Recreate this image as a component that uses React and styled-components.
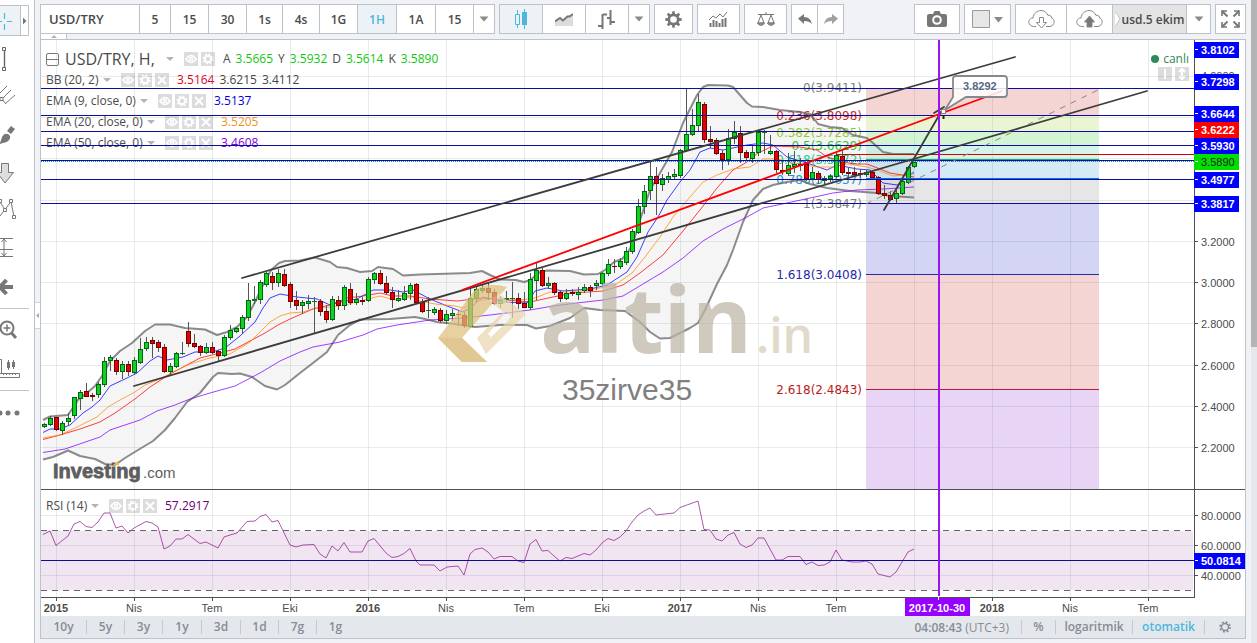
import React from "react";
import styled, { createGlobalStyle } from "styled-components";

const GlobalStyle = createGlobalStyle`
  * { box-sizing: border-box; }
  body { margin: 0; background: #f0f2f6; }
  button, input { font: inherit; color: inherit; }
`;

const UI_FONT = '"Trebuchet MS", "Open Sans", "Noto Sans", sans-serif';
const LINE = "#bdc1c9";

const Page = styled.div`
  display: flex;
  align-items: stretch;
  min-height: 100vh;
  overflow: hidden;
  font-family: ${UI_FONT};
  font-size: 12px;
  color: #4a4a4a;
`;

/* ---------- drawing tools ---------- */
const Sidebar = styled.nav`
  width: 35px;
  flex: none;
  padding-top: 1px;
  background: #fff;
  border-right: 1px solid ${LINE};
  display: flex;
  flex-direction: column;
`;
const ToolButton = styled.button`
  display: block;
  width: 34px;
  height: 38px;
  padding: 0;
  border: 0;
  background: none;
  svg { display: block; }
`;
const ToolDivider = styled.hr`
  width: 29px;
  height: 1px;
  margin: 3px 0 2px;
  border: 0;
  background: #c4c4c4;
`;
const Gutter = styled.div`
  width: 5px;
  flex: none;
  padding-top: 302px;
`;
const GutterHandle = styled.button`
  display: block;
  width: 5px;
  height: 27px;
  padding: 0;
  background: #fff;
  border: 1px solid #d0d3d9;
  border-width: 1px 0;
  svg { display: block; }
`;

/* ---------- top bar ---------- */
const Main = styled.main`
  flex: 1;
  min-width: 0;
`;
const Toolbar = styled.div`
  display: flex;
  gap: 4px;
  padding-top: 4px;
`;
const Spacer = styled.div`
  flex: 1;
`;
const Group = styled.div`
  display: flex;
  flex: none;
  height: 30px;
  background: #fff;
  border: 1px solid ${LINE};
`;
const SymbolInput = styled.input`
  width: 98px;
  padding: 0 8px;
  border: 0;
  background: none;
  font-size: 13px;
  font-weight: 600;
  outline: none;
`;
const BarButton = styled.button`
  width: ${(p) => p.$w}px;
  padding: 0;
  border: 0;
  border-left: 1px solid ${LINE};
  background: ${(p) => (p.$active ? "#edf2f6" : p.$grey ? "#e4e4e4" : "#fff")};
  color: ${(p) => (p.$active ? "#4db6dc" : "#4a4a4a")};
  font-weight: 600;
  display: flex;
  align-items: center;
  justify-content: center;
  &:first-child { border-left: 0; }
  svg { display: block; flex: none; }
`;
const Strip = styled.div`
  height: 5px;
  border-left: 1px solid ${LINE};
`;
const StripHandle = styled.button`
  display: flex;
  justify-content: center;
  align-items: center;
  width: 26px;
  height: 5px;
  padding: 0;
  background: #fff;
  border: 0;
  border-right: 1px solid ${LINE};
`;

/* ---------- chart ---------- */
const Panel = styled.section`
  border: 1px solid ${LINE};
  background: #fff;
`;
const ChartBox = styled.div`
  position: relative;
`;
const ChartSvg = styled.svg`
  display: block;
  position: relative;
  width: 100%;
  height: auto;
  pointer-events: none;
`;
const Legend = styled.div`
  position: absolute;
  left: 5px;
  top: ${(p) => p.$top}px;
  display: flex;
  flex-direction: column;
`;
const LegendRow = styled.div`
  display: flex;
  align-items: center;
  height: ${(p) => (p.$title ? 20 : 21)}px;
  line-height: 20px;
  white-space: nowrap;
`;
const LegendName = styled.span`
  width: ${(p) => p.$w}px;
  font-size: ${(p) => (p.$title ? 16 : 12)}px;
`;
const Caret = styled.span`
  width: 0;
  height: 0;
  margin-right: 10px;
  border: 4px solid transparent;
  border-top-color: #b4b4b4;
  border-bottom: 0;
`;
const Collapse = styled.button`
  position: relative;
  width: 13px;
  height: 13px;
  margin-right: 6px;
  padding: 0;
  border: 1px solid #777;
  border-radius: 2px;
  background: linear-gradient(#777, #777) center / 11px 1px no-repeat;
`;
const MiniButtons = styled.span`
  display: flex;
  gap: 3px;
  margin-right: 8px;
`;
const MiniButton = styled.button`
  width: 14px;
  height: 14px;
  padding: 0;
  border: 0;
  background: #dcdcdc;
  svg { display: block; }
`;
const Value = styled.span`
  margin-right: 5px;
  color: ${(p) => p.$c};
`;
const Live = styled.div`
  position: absolute;
  right: 56px;
  top: 10px;
  display: flex;
  flex-direction: column;
  align-items: flex-end;
  line-height: 17px;
  color: #2e8b57;
`;
const LiveDot = styled.span`
  display: inline-block;
  width: 8px;
  height: 8px;
  margin-right: 4px;
  border-radius: 50%;
  background: #2e8b57;
`;
const LiveButtons = styled.div`
  display: flex;
  gap: 3px;
`;

/* ---------- bottom bar ---------- */
const BottomBar = styled.div`
  display: flex;
  align-items: center;
  height: 22px;
  background: #e4e8ed;
`;
const BottomButton = styled.button`
  width: ${(p) => p.$w}px;
  height: 14px;
  padding: 0;
  border: 0;
  border-left: ${(p) => (p.$first ? "0" : "1px solid #c6cad0")};
  background: none;
  color: ${(p) => (p.$active ? "#4db6dc" : "#888c93")};
  font-weight: 600;
  line-height: 14px;
  display: flex;
  justify-content: center;
  align-items: center;
`;
const Clock = styled.span`
  margin-right: 12px;
  color: #888c93;
  b { font-weight: 600; }
`;
const RightGutter = styled.div`
  width: 5px;
  flex: none;
`;
const ScrollTrack = styled.div`
  width: 6px;
  flex: none;
  background: #e6e7ea;
`;
const ScrollThumb = styled.div`
  height: 347px;
  background: #b4b4b6;
`;

/* ---------- icons ---------- */
const gearPath = (n, r1, r2, c) => {
  const pts = [];
  for (let k = 0; k < n; k++) {
    const a = (k * 2 * Math.PI) / n;
    const s = Math.PI / n;
    [[-0.62, r1], [-0.36, r2], [0.36, r2], [0.62, r1]].forEach(([f, r]) => {
      pts.push(`${(c + r * Math.sin(a + f * s)).toFixed(2)} ${(c - r * Math.cos(a + f * s)).toFixed(2)}`);
    });
  }
  return `M${pts.join("L")}Z`;
};
const Gear = ({ size, color, sw = 2.6 }) => (
  <svg width={size} height={size} viewBox="0 0 18 18">
    <path d={gearPath(8, 6.4, 8.8, 9)} fill={color} />
    <circle cx="9" cy="9" r="3.6" fill="none" stroke={color} strokeWidth={sw} />
    <circle cx="9" cy="9" r="3.5" fill="#fff" />
  </svg>
);
const Down = ({ c = "#8a8a8a" }) => (
  <svg width="10" height="6" viewBox="0 0 10 6"><path d="M0.5 0.5h9L5 5.5z" fill={c} /></svg>
);
const EyeIcon = () => (
  <svg width="14" height="14" fill="none" stroke="#fff">
    <path d="M2 7q5-7 10 0q-5 7-10 0z" strokeWidth="1.6" /><circle cx="7" cy="7" r="1.5" strokeWidth="1.4" />
  </svg>
);
const MiniGear = () => (
  <svg width="14" height="14">
    <circle cx="7" cy="7" r="3.2" fill="none" stroke="#fff" strokeWidth="2" />
    <circle cx="7" cy="7" r="4.8" fill="none" stroke="#fff" strokeWidth="1.6" strokeDasharray="1.9 1.87" />
  </svg>
);
const CloseIcon = () => (
  <svg width="14" height="14"><path d="M3 3l8 8M11 3l-8 8" stroke="#fff" strokeWidth="2" /></svg>
);
const Minis = ({ close = true }) => (
  <MiniButtons>
    <MiniButton aria-label="Gizle"><EyeIcon /></MiniButton>
    <MiniButton aria-label="Ayarlar"><MiniGear /></MiniButton>
    {close && <MiniButton aria-label="Kaldır"><CloseIcon /></MiniButton>}
  </MiniButtons>
);

const CLOUD = "M8 17.5H5.5C-1 16.500-.5 9 5 9C5.500 4 9.500 1.500 13 1.500C17 1.500 19 4 20 6.500C22 5.500 24 7.500 23.500 9C27.500 10 27 16.500 22 17.500H18";

const tools = [
  ["İmleç", <>
    <path d="M0 4h20v31H0z" fill="#edf2f6" /><path d="M0 4.500H28.500V34.500H0M20.500 5V34" fill="none" stroke={LINE} />
    <path d="M4.500 12v6M4.500 23v6M0 20.500h2M7 20.500h5" stroke="#4db6dc" strokeWidth="1.2" /><path d="M23 16.500l3.500 3.500-3.500 3.500z" fill="#777" />
  </>],
  ["Trend çizgisi", <g fill="#fff" stroke="#666"><path d="M4.500 11v18" strokeWidth="1.400" /><path d="M2.500 8.500h3v3h-3zM2.500 28.500h3v3h-3z" /></g>],
  ["Yaba", <g fill="none" stroke="#777"><path d="M0 16l7-7M3 21L11 13M5 27l10-9M1 21l5 6" /><path d="M0 20.500h3v3H0z" fill="#fff" /></g>],
  ["Fırça", <><path d="M0 28c2-5 2-8 5-9c4-1 7 3 4 6C7 28 4 27 0 29z" fill="#777" /><path d="M7 16l4-5 4 3-4 5z" fill="#777" /></>],
  ["Ok", <path d="M1.500 10.500h7v9h5L5 30l-8-10.500h4.500z" fill="#ddd" stroke="#777" />],
  ["Desen", <g fill="#fff" stroke="#777"><path d="M0 11l5 7.500 6-8 3 15M5 18.500L0 25" fill="none" /><path d="M-1.500 8.500h3v3h-3zM9.500 8.500h3v3h-3zM3.500 17.500h3v3h-3zM12.500 24.500h3v3h-3z" /></g>],
  ["Ölçüm", <g stroke="#777" fill="none"><path d="M0 9.500h13M0 20.500h13M0 27.500h13M4 10v17" /><path d="M1.500 13L4 10l2.500 3M1.500 24L4 27l2.500-3" /></g>],
  ["Geri", <path d="M13 20H1M6.500 13L0 20l6.500 7" fill="none" stroke="#777" strokeWidth="4" />],
  null,
  ["Yakınlaştır", <g fill="none" stroke="#777"><circle cx="7" cy="17" r="6.500" strokeWidth="2" /><path d="M3.500 17h7M7 13.500v7" strokeWidth="1.500" /><path d="M11.500 22l4.500 5" strokeWidth="3" /></g>],
  ["Cetvel", <g fill="none" stroke="#777"><path d="M0 24.500h19.500v4H0M3.500 24v2M6.500 24v2M9.500 24v2M12.500 24v2M15.500 24v2M0 10.500h1.500v14" /><path d="M8.500 11v10M13.500 11v9" /><path d="M8.500 13v6M13.500 13v5" strokeWidth="3" /></g>],
  null,
  ["Diğer", <g fill="#777"><circle cx="0" cy="20" r="2.500" /><circle cx="8" cy="20" r="2.500" /><circle cx="17" cy="20" r="2.500" /></g>],
];

/* ---------- chart data, in chart units: [up, high, bodyTop, bodyBottom, low] ---------- */
const candles = `g423,424,426,427 g416,418,424,425 r417,417,429,430 g421,423,430,434 g413,418,421,425 g397,397,415,418 g390,392,398,409 r383,391,396,396 r393,395,396,400 g382,384,394,397 g357,361,384,386 g355,357,360,370 r358,360,371,374 g361,364,371,378 r361,364,371,375 g357,360,372,373 g338,349,362,363 g337,342,348,350 r337,340,343,357 r340,342,347,351 r344,347,371,372 g363,366,371,375 g352,353,366,367 g342,353,353,354 r322,331,343,346 r334,343,346,347 r345,346,352,355 g343,347,352,353 r342,347,352,353 r350,351,355,360 g335,337,355,356 g325,330,337,339 g327,328,331,332 g315,317,328,333 g283,300,317,320 g286,299,300,303 g280,282,299,303 g272,273,284,286 r272,276,282,289 g269,273,282,286 r269,274,285,286 r282,284,301,307 r291,300,305,309 g300,302,305,313 g295,301,303,308 g297,301,301,333 r299,301,311,315 r305,311,319,322 g296,299,319,320 r296,300,305,309 g285,287,305,309 r283,289,302,304 g293,299,302,304 r297,300,301,304 g277,279,300,301 g272,273,279,283 r270,273,283,284 r276,283,292,293 r287,292,299,307 g290,298,300,301 g286,293,299,300 g283,285,293,299 r283,284,302,303 r299,302,311,312 g297,310,310,317 g307,309,312,314 r308,310,320,322 g310,314,320,323 g309,313,315,320 r311,314,314,325 r312,315,325,327 g289,298,326,327 g287,289,298,302 g285,288,290,292 r282,288,292,299 r289,292,303,304 g296,300,303,307 g291,298,299,302 g282,298,298,317 r293,298,303,308 r292,303,307,307 g273,279,307,309 g263,270,280,299 r268,270,285,286 g277,283,285,288 r282,283,292,294 r291,292,298,301 g289,293,298,299 r289,292,293,295 g287,292,294,299 g284,287,290,292 r285,287,290,296 g280,283,285,289 g272,273,283,284 g259,264,273,275 r259,266,266,272 g258,261,266,268 g247,251,262,264 g229,231,251,253 g199,206,232,233 g185,191,206,213 g162,176,190,199 r167,176,183,214 g174,178,184,190 g172,176,179,182 g169,174,176,179 g149,150,175,177 g88,134,150,151 g109,125,134,135 g94,102,125,131 r102,104,139,142 r126,139,141,147 r138,140,153,154 r150,153,159,169 g129,138,159,164 g121,132,138,143 r126,133,152,162 r150,152,157,160 g146,152,158,162 g130,132,152,155 g130,132,132,153 g135,151,153,154 r150,151,169,172 r160,170,171,174 g153,165,173,175 g151,164,166,172 r158,164,165,170 r162,164,178,180 g167,172,178,179 r171,173,179,183 g176,178,180,183 g174,176,178,181 g153,155,176,177 r150,156,172,174 r168,172,173,176 r167,172,174,176 r169,173,174,177 g170,172,174,176 r171,172,177,178 r176,177,193,194 r185,193,195,198 r191,195,199,200 g190,193,198,203 g180,181,193,194 g166,167,182,183 g162,162,166,167`
  .split(" ")
  .map((s, i) => ({ x: 44 + i * 6, up: s[0] === "g", v: s.slice(1).split(",").map(Number) }));

const bbUpper = "43,420 50,416.5 56,416 68,415 78,400 88,392 95,386 102,376 110,361 120,351 132,343 145,331 155,324.5 170,324.5 185,328 205,329.5 217,335 227,332 237,327 247,317 255,302 263,285 271,270 279,263 285,261 300,260.5 307,259 315,257.5 330,262 337,267 347,268 360,272 372,271 378,267 393,269 403,275.5 420,274.5 470,273 482,271 490,275 500,279.5 516,280 524,282 530,280 540,272 547,270.5 570,271 584,274.5 598,274 605,270 614,262 622,259 628,252 633,243 640,220 650,190 660,173 672,152 683,123 697,95 703,87 708,85 728,85.5 733,87 747,103 752,106.5 763,107 780,110 800,112 810,114 815,120 818,124 830,127 842,128 853,135 867,138 873,143 883,152 893,154 914,154";
const bbLower = "43,459.5 53,457 60,454 68,450.5 80,456 95,459 105,464 115,465 125,458 138,450 153,441 165,430 175,418 187,402 200,393 213,377 218,373 232,374 240,373.5 252,377 265,386 277,389.5 285,385 300,373 313,363 327,352 338,335 350,325 360,319.5 390,319 415,317 425,319 437,322 455,324 475,327 500,325 527,325 536,328.5 550,326 570,318 580,311 584,308 600,310 625,311 640,322 650,332 660,338.5 670,338 690,328 698,323 705,310 717,284 727,265 733,250 743,222 753,200 763,189 773,185 787,182 800,180 810,184 827,188 850,191 877,193 890,196 914,197.5";
const bbMiddle = "43,439.5 60,435 80,429 100,422 115,413 135,399 150,387 170,374 185,366 200,358 220,353 235,349 250,341 265,333 278,325 290,319 313,309 330,305 347,298 363,296 380,293 393,296 410,296 430,299 457,301 483,298 507,300 530,302 553,297 573,293 603,291 623,285 640,273 663,255 683,231 700,210 717,188 733,170 747,162 758,153 773,146 800,147 817,150 827,157 853,164 867,164 880,169 890,173 914,177";
const ema20 = "43,438 60,435 75,428 97,417 108,407 120,400 135,392 145,385 160,379 175,371 190,364 210,358 230,354 250,342 260,332 270,322 280,316 290,313 303,312 315,308 330,307 345,305 360,301 380,296 395,300 412,297 420,301 435,304 455,306 464,308 475,301 500,298 520,300 535,298 550,292 570,292 590,290 615,285 632,273 645,257 660,237 673,217 690,197 703,182 717,175 733,169 750,167 763,159 777,159 800,164 817,167 833,167 847,164 867,167 880,171 893,176 914,174";
const ema9 = "43,432.5 50,429 60,429 70,425 83,413 92,407 100,400 110,386 125,379 137,373 150,361 158,356 167,360 183,357 195,352 212,352 225,348 240,336 255,322 263,308 270,298 280,294 297,297 317,299 330,305 340,302 357,299 373,290 390,290 403,292 413,290 430,299 447,306 463,312 470,308 483,297 487,298 503,302 527,303 535,291 547,288 563,291 590,289 607,285 627,272 637,257 648,232 658,217 667,200 680,182 690,170 700,152 710,148 723,150 747,145 763,143 773,145 787,157 807,163 827,170 837,165 857,169 870,170 883,183 897,185 914,172";
const ema50 = "43,452.5 65,449 100,437 110,430 140,420 157,411 175,405 190,399 210,393 235,386 260,373 280,361 300,352 313,347 340,342 363,335 377,329 397,325 417,322 430,320 463,318 490,315 530,310 553,306 577,303 603,300 623,296 643,284 663,272 683,258 703,241 723,229 747,217 763,208 787,203 810,198 833,193 857,190 883,189 914,187";
const rsi = "43,534.5 50,531 56,545.5 68,536 74,524 80,521.5 86,526.5 92,527.5 98,522 104,513 110,513 116,528 122,526 128,533 134,528 146,521.5 152,523 158,527 164,549 170,546 176,539 182,539 188,534.5 200,543.5 206,542 218,548 224,537 230,535 237,533 247,521.5 255,521 260,516.5 266,514.5 272,522 278,520.5 290,545 296,547 303,545 314,544.5 320,554 326,558 332,546 338,551 344,542.5 350,552 362,552 368,541 374,538.5 386,553 392,557.5 398,556.5 404,553.5 410,548.5 416,561 420,565 434,565 440,571 447,567 458,566 464,575 470,554 475,549.5 482,548 488,552 494,559 500,556.5 512,556.5 518,561 524,562.5 530,544 536,539.5 542,551 548,550.5 554,556 560,561 566,557.5 572,558.5 578,556 584,553.5 590,555 596,550 602,543 608,538.5 614,540.5 620,537 626,531 632,522 638,515 644,511 650,508 656,515 674,513 680,507.5 698,501 704,529.5 710,530 716,539 722,541 728,535 734,532.5 740,544 746,547.5 752,545 758,538 764,538 776,560 782,560 788,556.5 800,556.5 806,564.5 812,562 818,565.5 824,565 830,562 836,550 842,560 852,562 860,562 866,561 872,564 878,574 884,575.5 890,577 896,572 902,562 908,552 914,549";

const months = [["2015", 1], ["Nis"], ["Tem"], ["Eki"], ["2016", 1], ["Nis"], ["Tem"], ["Eki"], ["2017", 1], ["Nis"], ["Tem"], [""], ["2018", 1], ["Nis"], ["Tem"]]
  .map(([label, bold], i) => ({ label, bold, x: 56.5 + 78 * i }));
const gridY = [76.5, 117.5, 158.5, 200.5, 241.5, 282.5, 323.5, 365.5, 406.5, 447.5, 515.5, 545.5, 575.5];
const levels = [88.5, 115.5, 131.5, 145.5, 160.5, 179.5, 203.5];
const zones = [[89, 116, "#cc2828"], [116, 132, "#95cc28"], [132, 146, "#28cc28"], [146, 160, "#28cc95"], [160, 179, "#2895cc"], [179, 203, "#808080"], [203, 274, "#2828cc"], [274, 389, "#cc2828"], [389, 489, "#8a28cc"]];
const fibs = [["0(3.9411)", 88, "#808080"], ["0.236(3.8098)", 116, "#cc2828"], ["0.382(3.7285)", 133, "#95cc28"], ["0.5(3.6629)", 146, "#28cc28"], ["0.618(3.5972)", 160, "#28cc95"], ["0.786(3.5037)", 180, "#2895cc"], ["1(3.3847)", 204, "#808080"], ["1.618(3.0408)", 275, "#2828aa"], ["2.618(2.4843)", 390, "#b81c1c"]];
const prices = [["4.0000", 76], ["3.2000", 242], ["3.0000", 283], ["2.8000", 324], ["2.6000", 366], ["2.4000", 407], ["2.2000", 448], ["80.0000", 516], ["60.0000", 546], ["40.0000", 576]];
const tags = [["3.8102", 50, "#00f"], ["3.7298", 82, "#00f"], ["3.6644", 114, "#00f"], ["3.6222", 130, "#f00"], ["3.5930", 146, "#00f"], ["3.5890", 162, "#00e000"], ["3.4977", 180, "#00f"], ["3.8817", 204, "#00f"], ["50.0814", 561, "#00f"]]
  .map((t) => (t[1] === 204 ? ["3.3817", 204, "#00f"] : t));

const Poly = ({ p, c, w = 1, o = 0.75 }) => (
  <polyline points={p} fill="none" stroke={c} strokeWidth={w} opacity={o} strokeLinejoin="round" />
);

const Chart = () => (
  <ChartSvg viewBox="41 40 1204 576" role="img" aria-label="USD/TRY grafiği">
    <g stroke="#8ba3a3" strokeOpacity="0.22">
      {months.map((m) => <path key={m.x} d={`M${m.x} 40V597`} />)}
      {gridY.map((y) => <path key={y} d={`M41 ${y}H1194`} />)}
    </g>
    <polygon points={`${bbUpper} ${bbLower.split(" ").reverse().join(" ")}`} fill="#808080" opacity="0.08" />
    <rect x="41" y="531" width="1152" height="59" fill="#800080" opacity="0.1" />
    {zones.map(([a, b, c]) => <rect key={a} x="866" y={a} width="233" height={b - a} fill={c} opacity="0.2" />)}
    <g fontFamily='"DejaVu Sans", Verdana, sans-serif' fontSize="12" textAnchor="end">
      {fibs.map(([t, y, c]) => <text key={t} x="862" y={y + 4} fill={c}>{t}</text>)}
    </g>

    <Poly p={bbUpper} c="#666" w={2} />
    <Poly p={bbLower} c="#666" w={2} />
    <Poly p={bbMiddle} c="#f00" />
    <Poly p={ema9} c="#00f" />
    <Poly p={ema20} c="#ff8c00" />
    <Poly p={ema50} c="#8000ff" />

    <g shapeRendering="crispEdges">
      {candles.map(({ x, up, v }) => (
        <g key={x}>
          <path d={`M${x + 0.5} ${v[0]}V${v[3] + 1}`} stroke="#555" />
          {v[2] - v[1] < 2
            ? <rect x={x - 2} y={v[1]} width="5" height={v[2] - v[1] + 1} fill={up ? "#007a1c" : "#7a0000"} />
            : <rect x={x - 1.5} y={v[1] + 0.5} width="4" height={v[2] - v[1]} fill={up ? "#0fd21c" : "#e60000"} stroke={up ? "#006414" : "#6e0000"} />}
        </g>
      ))}
    </g>

    <g shapeRendering="crispEdges">
      <path d="M836 154.500H1194" stroke="#e00000" />
      <path d="M866 159.500H1099" stroke="#28a878" />
      <path d="M866 178.500H1099" stroke="#0070f0" />
      <path d="M866 274.500H1099" stroke="#2828aa" />
      <path d="M866 389.500H1099" stroke="#b81c3c" />
      {levels.map((y) => <path key={y} d={`M41 ${y}H1194`} stroke="#0c0ca0" />)}
      <path d="M41 161.500H1194" stroke="#0a90b0" strokeDasharray="1 1" />
    </g>
    <path d="M866 204L1098 90" stroke="#888" strokeDasharray="6 6" />

    <g stroke="#3c3c3c" strokeWidth="1.800" strokeLinecap="round">
      <path d="M242 278L1015 57" /><path d="M134 386L1147 91" />
      <path d="M884 210L941 112M934 113L944 107" />
    </g>
    <path d="M462 290L1002 91" stroke="#f00" strokeWidth="1.800" />

    {/* site watermark */}
    <g opacity="0.72">
      <path d="M438 338L474 291Q486 281 507 287L462 338L487 362H462z" fill="#dfc07c" />
      <path d="M438 338H462L487 362H462z" fill="#d6b268" />
      <path d="M477 338L503 312L489 300L499 294L526 314L486 354zM491 337L486 343L495 333L506 323L511 316L506 312L488 334z" fill="#e8d6b0" fillRule="evenodd" />
      <text x="540" y="353" fontFamily='"Open Sans", sans-serif' fontWeight="700" fontSize="92" fill="#bdb5a6">altin</text>
      <text x="756" y="353" fontFamily='"Open Sans", sans-serif' fontWeight="600" fontSize="48" fill="#d6ccb6">.in</text>
    </g>
    <text x="562" y="400" fontFamily='"Liberation Sans", Arial, sans-serif' fontSize="30" fill="#808080">35zirve35</text>
    <g fontFamily='"Liberation Sans", Arial, sans-serif' fill="#5e5e5e">
      <text x="53" y="478" fontSize="20" fontWeight="700" stroke="#5e5e5e" strokeWidth="0.800">Investing</text>
      <text x="143" y="478" fontSize="15">.com</text>
      <path d="M112 466L118 461L119 465z" fill="#f0b840" />
    </g>

    <Poly p={rsi} c="#800080" o={0.65} />
    <g shapeRendering="crispEdges">
      <path d="M41 530.500H1194M41 590.500H1194" stroke="#666" strokeDasharray="6 5" />
      <path d="M41 560.500H1194" stroke="#0c0ca0" />
      <path d="M41 489.500H1245M1194.500 40V597M41 597.500H1195" stroke="#505050" fill="none" />
      <path d="M938.500 40V596" stroke="#9a14f5" strokeWidth="2" />
      {months.map((m) => <path key={m.x} d={`M${m.x} 598v3`} stroke="#505050" />)}
    </g>

    {/* price callout */}
    <path d="M956 76H1004Q1007 76 1007 79V94Q1007 97 1004 97H966L945 110L953 97V79Q953 76 956 76z" fill="#fff" fillOpacity="0.850" stroke="#85898f" strokeWidth="1.800" />
    <rect x="941.500" y="109.500" width="4" height="4" fill="#fff" stroke="#888" />
    <path d="M943.500 115v4" stroke="#222" strokeWidth="2" />

    <g fontFamily='"Liberation Sans", Arial, sans-serif' fontSize="11" fill="#4c4c4c">
      <text x="963" y="90" fontWeight="700" fill="#566a82">3.8292</text>
      {prices.map(([t, y]) => (
        <g key={t}><path d={`M1195 ${y - 0.5}h3`} stroke="#505050" /><text x="1201" y={y + 4}>{t}</text></g>
      ))}
      {tags.map(([t, y, c]) => (
        <g key={t}>
          <rect x="1194" y={y - 8} width={y > 500 ? 51 : 45} height="16" fill={c} />
          <path d={`M1195 ${y - 0.5}h3`} stroke="#fff" />
          <text x="1201" y={y + 4} fontWeight={c === "#00e000" ? 400 : 700} fill={c === "#00e000" ? "#222" : "#fff"}>{t}</text>
        </g>
      ))}
      {months.map((m) => (
        <text key={m.x} x={m.x - 0.5} y="612" textAnchor="middle" fontWeight={m.bold ? 700 : 400}>{m.label}</text>
      ))}
      <rect x="905" y="598" width="65" height="18" fill="#9600ff" />
      <path d="M938.500 597v3" stroke="#fff" />
      <text x="937" y="612" textAnchor="middle" fill="#fff" fontWeight="700">2017-10-30</text>
    </g>
  </ChartSvg>
);

const intervals = [["5", 31], ["15", 38], ["30", 38], ["1s", 36], ["4s", 37], ["1G", 38], ["1H", 39], ["1A", 39], ["15", 38]];
const ranges = [["10y", 45], ["5y", 38], ["3y", 38], ["1y", 39], ["3d", 39], ["1d", 38], ["7g", 38], ["1g", 38]];
const indicators = [
  ["BB (20, 2)", 57, [["3.5164", "#e00020"], ["3.6215", "#444"], ["3.4112", "#444"]]],
  ["EMA (9, close, 0)", 94, [["3.5137", "#0000d8"]]],
  ["EMA (20, close, 0)", 101, [["3.5205", "#f09020"]]],
  ["EMA (50, close, 0)", 101, [["3.4608", "#8000e0"]]],
];
const ohlc = [["A", "3.5665"], ["Y", "3.5932"], ["D", "3.5614"], ["K", "3.5890"]];

export default function App() {
  return (
    <Page>
      <GlobalStyle />
      <Sidebar>
        {tools.map((t, i) => t
          ? <ToolButton key={i} aria-label={t[0]}><svg width="34" height="38" viewBox="0 0 34 38">{t[1]}</svg></ToolButton>
          : <ToolDivider key={i} />)}
      </Sidebar>
      <Gutter>
        <GutterHandle aria-label="Paneli gizle"><svg width="5" height="25"><path d="M4 10v5L1 12.500z" fill="#aaa" /></svg></GutterHandle>
      </Gutter>
      <Main>
        <Toolbar>
          <Group>
            <SymbolInput aria-label="Sembol" defaultValue="USD/TRY" />
            {intervals.map(([t, w], i) => (
              <BarButton key={i} $w={w} $active={t === "1H"}>{t}</BarButton>
            ))}
            <BarButton $w={21} aria-label="Aralıklar"><Down /></BarButton>
          </Group>
          <Group>
            <BarButton $w={42} $active aria-label="Mum">
              <svg width="14" height="20"><path d="M3.500 1v18" stroke="#4db6dc" /><path d="M1.500 5.500h4v10h-4z" fill="#edf2f6" stroke="#4db6dc" /><path d="M10.500 0v20" stroke="#4db6dc" /><path d="M8 3h5v13H8z" fill="#4db6dc" /></svg>
            </BarButton>
            <BarButton $w={43} aria-label="Alan">
              <svg width="18" height="13"><path d="M0 8l5-3 3 2 4-4 6-2v12H0z" fill="#dcdcdc" /><path d="M0 8.500l5-3.500 3 2.500 4.500-4 2 0L18 1" fill="none" stroke="#777" strokeWidth="2" /></svg>
            </BarButton>
            <BarButton $w={43} aria-label="Bar">
              <svg width="18" height="19"><path d="M0 16h4M4.500 4v15M5 4.500h4M9 8h3M12.500 0v15M13 12h4" fill="none" stroke="#777" strokeWidth="2" /></svg>
            </BarButton>
            <BarButton $w={21} aria-label="Grafik türleri"><Down /></BarButton>
          </Group>
          <Group><BarButton $w={37} aria-label="Ayarlar"><Gear size={17} color="#777" /></BarButton></Group>
          <Group>
            <BarButton $w={41} aria-label="Göstergeler">
              <svg width="19" height="17"><path d="M1.500 16v-4M4.500 16V9M7.500 16v-6M10.500 16v-4M13.500 16V8M16.500 16V7" stroke="#777" strokeWidth="2" /><path d="M0 9l4-4 3 2 4-4 3 3 4-5" fill="none" stroke="#777" /></svg>
            </BarButton>
          </Group>
          <Group>
            <BarButton $w={41} aria-label="Karşılaştır">
              <svg width="18" height="15" fill="none" stroke="#777"><path d="M1 2.500h16M9 0v3M4 3L1 11h6zM14 3l-3 8h6z" /><path d="M0.500 11h7c-1 3-6 3-7 0zM10.500 11h7c-1 3-6 3-7 0z" fill="#999" /></svg>
            </BarButton>
          </Group>
          <Group>
            <BarButton $w={25} aria-label="Geri al"><svg width="14" height="11"><path d="M0 4.500L6 0v3c5 0 7 3 8 7c-2-2-4-3-8-3v3z" fill="#777" /></svg></BarButton>
            <BarButton $w={26} aria-label="Yinele"><svg width="14" height="11"><path d="M14 4.500L8 0v3c-5 0-7 3-8 7c2-2 4-3 8-3v3z" fill="#a0a0a0" /></svg></BarButton>
          </Group>
          <Spacer />
          <Group>
            <BarButton $w={44} aria-label="Ekran görüntüsü">
              <svg width="20" height="16"><path d="M2 3h4l1.500-3h5L14 3h4q2 0 2 2v9q0 2-2 2H2q-2 0-2-2V5q0-2 2-2z" fill="#777" /><circle cx="10" cy="9" r="3.800" fill="#777" stroke="#fff" strokeWidth="2" /></svg>
            </BarButton>
          </Group>
          <Group>
            <BarButton $w={45} aria-label="Renk">
              <svg width="31" height="18"><path d="M0.500 0.500h17v17H0.500z" fill="#e6e6e6" stroke="#999" /><path d="M22 7h9l-4.500 5.500z" fill="#8a8a8a" /></svg>
            </BarButton>
          </Group>
          <Group>
            <BarButton $w={50} aria-label="Yükle">
              <svg width="27" height="20" viewBox="0 0 27 20" fill="none" stroke="#888"><path d={CLOUD} /><path d="M11.500 8.500h4v5h3L13.500 19l-5-5.500h3z" /></svg>
            </BarButton>
            <BarButton $w={46} aria-label="Kaydet">
              <svg width="27" height="20" viewBox="0 0 27 20" fill="none" stroke="#888"><path d={CLOUD} /><path d="M11 18v-5H8.500l5-6 5 6H16v5z" fill="#777" /></svg>
            </BarButton>
            <BarButton $w={74} $grey>
              <svg width="7" height="28"><path d="M0 5L5 14L0 23z" fill="#fff" /><path d="M0 6l5 8-5 8" fill="none" stroke={LINE} /></svg>
              usd.5 ekim
            </BarButton>
            <BarButton $w={24} aria-label="Düzenler"><Down /></BarButton>
          </Group>
          <Group>
            <BarButton $w={29} aria-label="Tam ekran">
              <svg width="19" height="18" fill="none" stroke="#777" strokeWidth="2"><path d="M1 6V1h5M13 1h5v5M18 12v5h-5M6 17H1v-5" strokeWidth="1.600" /><path d="M1 1l5.500 5.500M18 1l-5.500 5.500M18 17l-5.500-5.500M1 17l5.500-5.500" /></svg>
            </BarButton>
          </Group>
        </Toolbar>
        <Strip>
          <StripHandle aria-label="Araç çubuğunu gizle"><svg width="6" height="3"><path d="M0 3h6L3 0z" fill="#b0b0b0" /></svg></StripHandle>
        </Strip>
        <Panel>
          <ChartBox>
            <Legend $top={9}>
              <LegendRow $title>
                <Collapse aria-label="Göstergeyi daralt" />
                <LegendName $title $w={101}>USD/TRY, H,</LegendName>
                <Caret />
                <Minis close={false} />
                {ohlc.map(([k, v]) => <React.Fragment key={k}><Value $c="#4a4a4a">{k}</Value><Value $c="#10c810">{v}</Value></React.Fragment>)}
              </LegendRow>
              {indicators.map(([name, w, vals]) => (
                <LegendRow key={name}>
                  <LegendName $w={w}>{name}</LegendName>
                  <Caret />
                  <Minis />
                  {vals.map(([v, c]) => <Value key={v} $c={c}>{v}</Value>)}
                </LegendRow>
              ))}
            </Legend>
            <Legend $top={455}>
              <LegendRow>
                <LegendName $w={45}>RSI (14)</LegendName>
                <Caret />
                <Minis />
                <Value $c="#700070">57.2917</Value>
              </LegendRow>
            </Legend>
            <Live>
              <span><LiveDot />canlı</span>
              <LiveButtons>
                <MiniButton aria-label="Ölçek"><svg width="14" height="14"><path d="M7 2v10" stroke="#fff" strokeWidth="2" /></svg></MiniButton>
                <MiniButton aria-label="Otomatik ölçek"><svg width="14" height="14"><path d="M7 2v10M4 5l3-3 3 3M4 9l3 3 3-3" stroke="#fff" strokeWidth="2" fill="none" /></svg></MiniButton>
              </LiveButtons>
            </Live>
            <Chart />
          </ChartBox>
          <BottomBar>
            {ranges.map(([t, w], i) => <BottomButton key={t} $w={w} $first={i === 0}>{t}</BottomButton>)}
            <Spacer />
            <Clock><b>04:08:43</b> (UTC+3)</Clock>
            <BottomButton $w={34}>%</BottomButton>
            <BottomButton $w={77}>logaritmik</BottomButton>
            <BottomButton $w={72} $active>otomatik</BottomButton>
            <BottomButton $w={41} aria-label="Ölçek ayarları">
              <svg width="12" height="12" fill="none" stroke="#888c93"><circle cx="6" cy="6" r="3.500" strokeWidth="1.400" /><circle cx="6" cy="6" r="5" strokeWidth="1.600" strokeDasharray="1.930 2" /></svg>
            </BottomButton>
          </BottomBar>
        </Panel>
      </Main>
      <RightGutter />
      <ScrollTrack><ScrollThumb /></ScrollTrack>
    </Page>
  );
}
